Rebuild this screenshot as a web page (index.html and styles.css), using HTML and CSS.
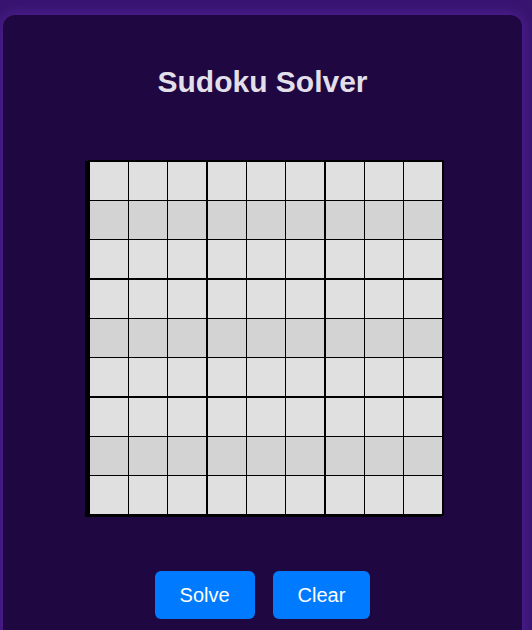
FILE: index.html
```html
<!DOCTYPE html>
<html lang="en">
<head>
<meta charset="utf-8">
<title>Sudoku Solver</title>
<link rel="stylesheet" href="styles.css">
</head>
<body>
<div class="card">
  <h1 class="title">Sudoku Solver</h1>
  <div class="board-wrap">
    <div class="board">
      <div class="row"><input class="cell"><input class="cell"><input class="cell"><input class="cell"><input class="cell"><input class="cell"><input class="cell"><input class="cell"><input class="cell"></div>
      <div class="row"><input class="cell"><input class="cell"><input class="cell"><input class="cell"><input class="cell"><input class="cell"><input class="cell"><input class="cell"><input class="cell"></div>
      <div class="row"><input class="cell"><input class="cell"><input class="cell"><input class="cell"><input class="cell"><input class="cell"><input class="cell"><input class="cell"><input class="cell"></div>
      <div class="row"><input class="cell"><input class="cell"><input class="cell"><input class="cell"><input class="cell"><input class="cell"><input class="cell"><input class="cell"><input class="cell"></div>
      <div class="row"><input class="cell"><input class="cell"><input class="cell"><input class="cell"><input class="cell"><input class="cell"><input class="cell"><input class="cell"><input class="cell"></div>
      <div class="row"><input class="cell"><input class="cell"><input class="cell"><input class="cell"><input class="cell"><input class="cell"><input class="cell"><input class="cell"><input class="cell"></div>
      <div class="row"><input class="cell"><input class="cell"><input class="cell"><input class="cell"><input class="cell"><input class="cell"><input class="cell"><input class="cell"><input class="cell"></div>
      <div class="row"><input class="cell"><input class="cell"><input class="cell"><input class="cell"><input class="cell"><input class="cell"><input class="cell"><input class="cell"><input class="cell"></div>
      <div class="row"><input class="cell"><input class="cell"><input class="cell"><input class="cell"><input class="cell"><input class="cell"><input class="cell"><input class="cell"><input class="cell"></div>
    </div>
  </div>
  <div class="actions">
    <button class="btn">Solve</button>
    <button class="btn">Clear</button>
  </div>
</div>
</body>
</html>
```
FILE: styles.css
```css
html, body {
  margin: 0;
  padding: 0;
}
body {
  background: #38156f;
  font-family: "Liberation Sans", Arial, sans-serif;
  padding: 15px 10px 40px 3px;
  min-height: 700px;
}
.card {
  background: #1f0841;
  border-radius: 12px;
  box-shadow: 0 0 14px rgba(110, 45, 200, 0.55);
  padding: 51px 0 80px;
}
.title {
  margin: 0 0 62px;
  text-align: center;
  font-size: 30px;
  line-height: 32px;
  font-weight: bold;
  color: #e2dfea;
}
.board-wrap {
  display: flex;
  justify-content: center;
  padding-left: 7px;
  margin-bottom: 55px;
}
.board {
  border: 2px solid #000;
  box-shadow: -3px 1px 0 #000;
}
.row {
  display: flex;
  background: #e0e0e0;
}
.row:nth-child(3n+2) {
  background: #d3d3d3;
}
.cell {
  display: block;
  box-sizing: content-box;
  width: 38px;
  height: 38px;
  padding: 0;
  margin: 0;
  border: 0;
  border-right: 1px solid #000;
  border-bottom: 1px solid #000;
  background: transparent;
  font-family: "Liberation Sans", Arial, sans-serif;
  font-size: 20px;
  text-align: center;
  outline: none;
}
.cell:nth-child(3n) {
  border-right-width: 2px;
}
.cell:last-child {
  border-right: 0;
}
.row:nth-child(3n) .cell {
  border-bottom-width: 2px;
}
.row:last-child .cell {
  border-bottom: 0;
}
.actions {
  display: flex;
  justify-content: center;
  gap: 18px;
}
.btn {
  background: #007bff;
  color: #fff;
  border: 0;
  border-radius: 6px;
  padding: 12px 25px;
  font-family: "Liberation Sans", Arial, sans-serif;
  font-size: 20px;
  line-height: 24px;
  cursor: pointer;
}
```
